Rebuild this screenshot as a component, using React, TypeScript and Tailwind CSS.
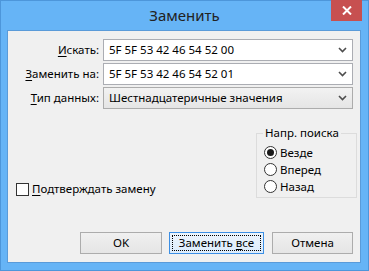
import React from "react";

const font = { fontFamily: '"Noto Sans", "Open Sans", sans-serif' };

function Chevron() {
    return (
        <svg width="9" height="6" viewBox="0 0 9 6" className="shrink-0">
            <path d="M1 1 L4.5 4.5 L8 1" fill="none" stroke="#4d4d4d" strokeWidth="1.6" />
        </svg>
    );
}

function Combo({ value, editable }: { value: string; editable?: boolean }) {
    return (
        <div
            className={
                "h-[22px] flex items-center pl-[5px] pr-[5px] border " +
                (editable
                    ? "bg-white border-[#abadb3]"
                    : "bg-gradient-to-b from-[#f2f2f2] to-[#e5e5e5] border-[#acacac]")
            }>
            <span className="flex-1 truncate">{value}</span>
            <Chevron />
        </div>
    );
}

function Radio({ label, checked }: { label: string; checked?: boolean }) {
    return (
        <div className="h-[17px] flex items-center gap-[3px]">
            <div className="w-[13px] h-[13px] rounded-full border border-[#333] bg-white flex items-center justify-center">
                {checked && <div className="w-[7px] h-[7px] rounded-full bg-[#1a1a1a]" />}
            </div>
            <span>{label}</span>
        </div>
    );
}

export default function App(): JSX.Element {
    return (
        <div
            style={font}
            className="w-[369px] h-[271px] bg-[#66b4f6] border border-[#4d96da] flex flex-col text-[11.5px] text-black leading-[16px]">
            {/* title bar */}
            <div className="h-[29px] relative flex items-center justify-center">
                <span className="text-[15px] text-[#222] mt-[-2px]">Заменить</span>
                <div className="absolute top-[-1px] right-[6px] w-[31px] h-[21px] bg-[#c75050] flex items-center justify-center">
                    <svg width="10" height="9" viewBox="0 0 10 9">
                        <path d="M1 0.5 L9 8.5 M9 0.5 L1 8.5" stroke="white" strokeWidth="2" />
                    </svg>
                </div>
            </div>

            {/* client area */}
            <div className="flex-1 ml-[6px] mr-[7px] mb-[7px] border border-[#5a9bd9] bg-[#f0f0f0] flex flex-col">
                <div className="grid grid-cols-[91px_1fr] gap-x-[4px] gap-y-[2px] mt-[8px] mr-[7px] items-center">
                    <div className="text-right">
                        <span className="underline underline-offset-2">И</span>скать:
                    </div>
                    <Combo value="5F 5F 53 42 46 54 52 00" editable />
                    <div className="text-right">
                        <span className="underline underline-offset-2">З</span>аменить на:
                    </div>
                    <Combo value="5F 5F 53 42 46 54 52 01" editable />
                    <div className="text-right">
                        <span className="underline underline-offset-2">Т</span>ип данных:
                    </div>
                    <Combo value="Шестнадцатеричные значения" />
                </div>

                <div className="flex items-end justify-between mt-[16px] pl-[8px] mr-[3px]">
                    <div className="flex items-center gap-[3px] mb-[1px]">
                        <div className="w-[13px] h-[13px] border border-[#333] bg-white" />
                        <span>
                            <span className="underline underline-offset-2">П</span>одтверждать замену
                        </span>
                    </div>
                    <fieldset className="w-[101px] border border-[#dcdcdc] px-[7px] pt-[3px] pb-[2px]">
                        <legend className="px-[2px] ml-[-1px]">Напр. поиска</legend>
                        <Radio label="Везде" checked />
                        <Radio label="Вперед" />
                        <Radio label="Назад" />
                    </fieldset>
                </div>

                <div className="mt-auto mb-[8px] mr-[7px] flex justify-end">
                    <button className="w-[82px] h-[22px] border border-[#acacac] bg-gradient-to-b from-[#f0f0f0] to-[#e5e5e5] mr-[7px]">
                        OK
                    </button>
                    <button className="w-[95px] h-[22px] border border-[#3c8fe4] bg-gradient-to-b from-[#ecf4fc] to-[#dcecfc] p-[2px] mr-[8px]">
                        <div className="w-full h-full border border-dotted border-black flex items-center justify-center">
                            <span>
                                Заменить <span className="underline underline-offset-2">в</span>се
                            </span>
                        </div>
                    </button>
                    <button className="w-[81px] h-[22px] border border-[#acacac] bg-gradient-to-b from-[#f0f0f0] to-[#e5e5e5]">
                        Отмена
                    </button>
                </div>
            </div>
        </div>
    );
}
